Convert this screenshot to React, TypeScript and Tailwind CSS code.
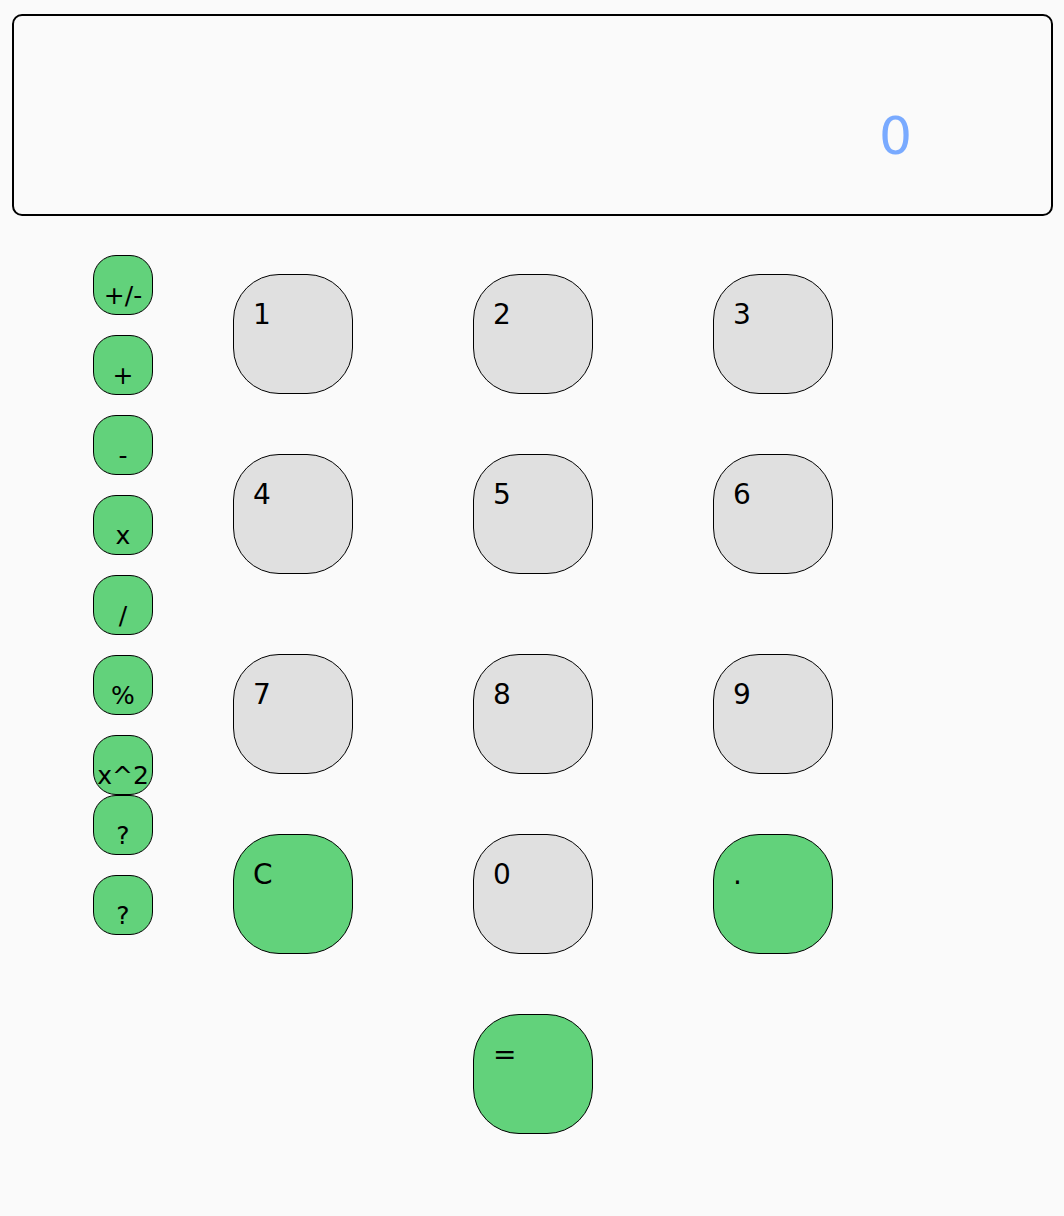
const font = { fontFamily: '"DejaVu Sans", sans-serif' };

function OpKey({ label, className = "" }: { label: string; className?: string }) {
  return (
    <button
      className={`w-[60px] h-[60px] shrink-0 rounded-[23px] border-[1.5px] border-black bg-[#62d27b] flex justify-center pt-[27px] text-[25px] leading-none text-black whitespace-nowrap ${className}`}
    >
      {label}
    </button>
  );
}

function NumKey({ label, green = false }: { label: string; green?: boolean }) {
  return (
    <button
      className={`w-[120px] h-[120px] rounded-[46px] border-[1.5px] border-black flex items-start pl-[19px] pt-[19px] text-[28px] text-black ${
        green ? "bg-[#62d27b]" : "bg-[#e0e0e0]"
      }`}
    >
      {label}
    </button>
  );
}

export default function App() {
  return (
    <main className="min-h-screen w-[1064px] h-[1216px] bg-[#fafafa]" style={font}>
      {/* Display */}
      <div className="ml-3 mr-[11px] pt-[14px]">
        <div className="h-[202px] rounded-[10px] border-2 border-black bg-[#fafafa] flex justify-end pr-[139px] pt-[81px]">
          <span className="text-[52px] leading-normal text-[#79aaff] h-fit">0</span>
        </div>
      </div>

      <div className="flex mt-[39px]">
        {/* Operators */}
        <div className="ml-[93px] flex flex-col">
          <OpKey label="+/-" />
          <OpKey label="+" className="mt-5" />
          <OpKey label="-" className="mt-5" />
          <OpKey label="x" className="mt-5" />
          <OpKey label="/" className="mt-5" />
          <OpKey label="%" className="mt-5" />
          <OpKey label="x^2" className="mt-5" />
          <OpKey label="?" />
          <OpKey label="?" className="mt-5" />
        </div>

        {/* Keypad */}
        <div className="ml-20 mt-[19px] flex flex-col">
          <div className="flex gap-[120px]">
            <NumKey label="1" />
            <NumKey label="2" />
            <NumKey label="3" />
          </div>
          <div className="flex gap-[120px] mt-[60px]">
            <NumKey label="4" />
            <NumKey label="5" />
            <NumKey label="6" />
          </div>
          <div className="flex gap-[120px] mt-20">
            <NumKey label="7" />
            <NumKey label="8" />
            <NumKey label="9" />
          </div>
          <div className="flex gap-[120px] mt-[60px]">
            <NumKey label="C" green />
            <NumKey label="0" />
            <NumKey label="." green />
          </div>
          <div className="flex mt-[60px] ml-[240px]">
            <NumKey label="=" green />
          </div>
        </div>
      </div>
    </main>
  );
}
